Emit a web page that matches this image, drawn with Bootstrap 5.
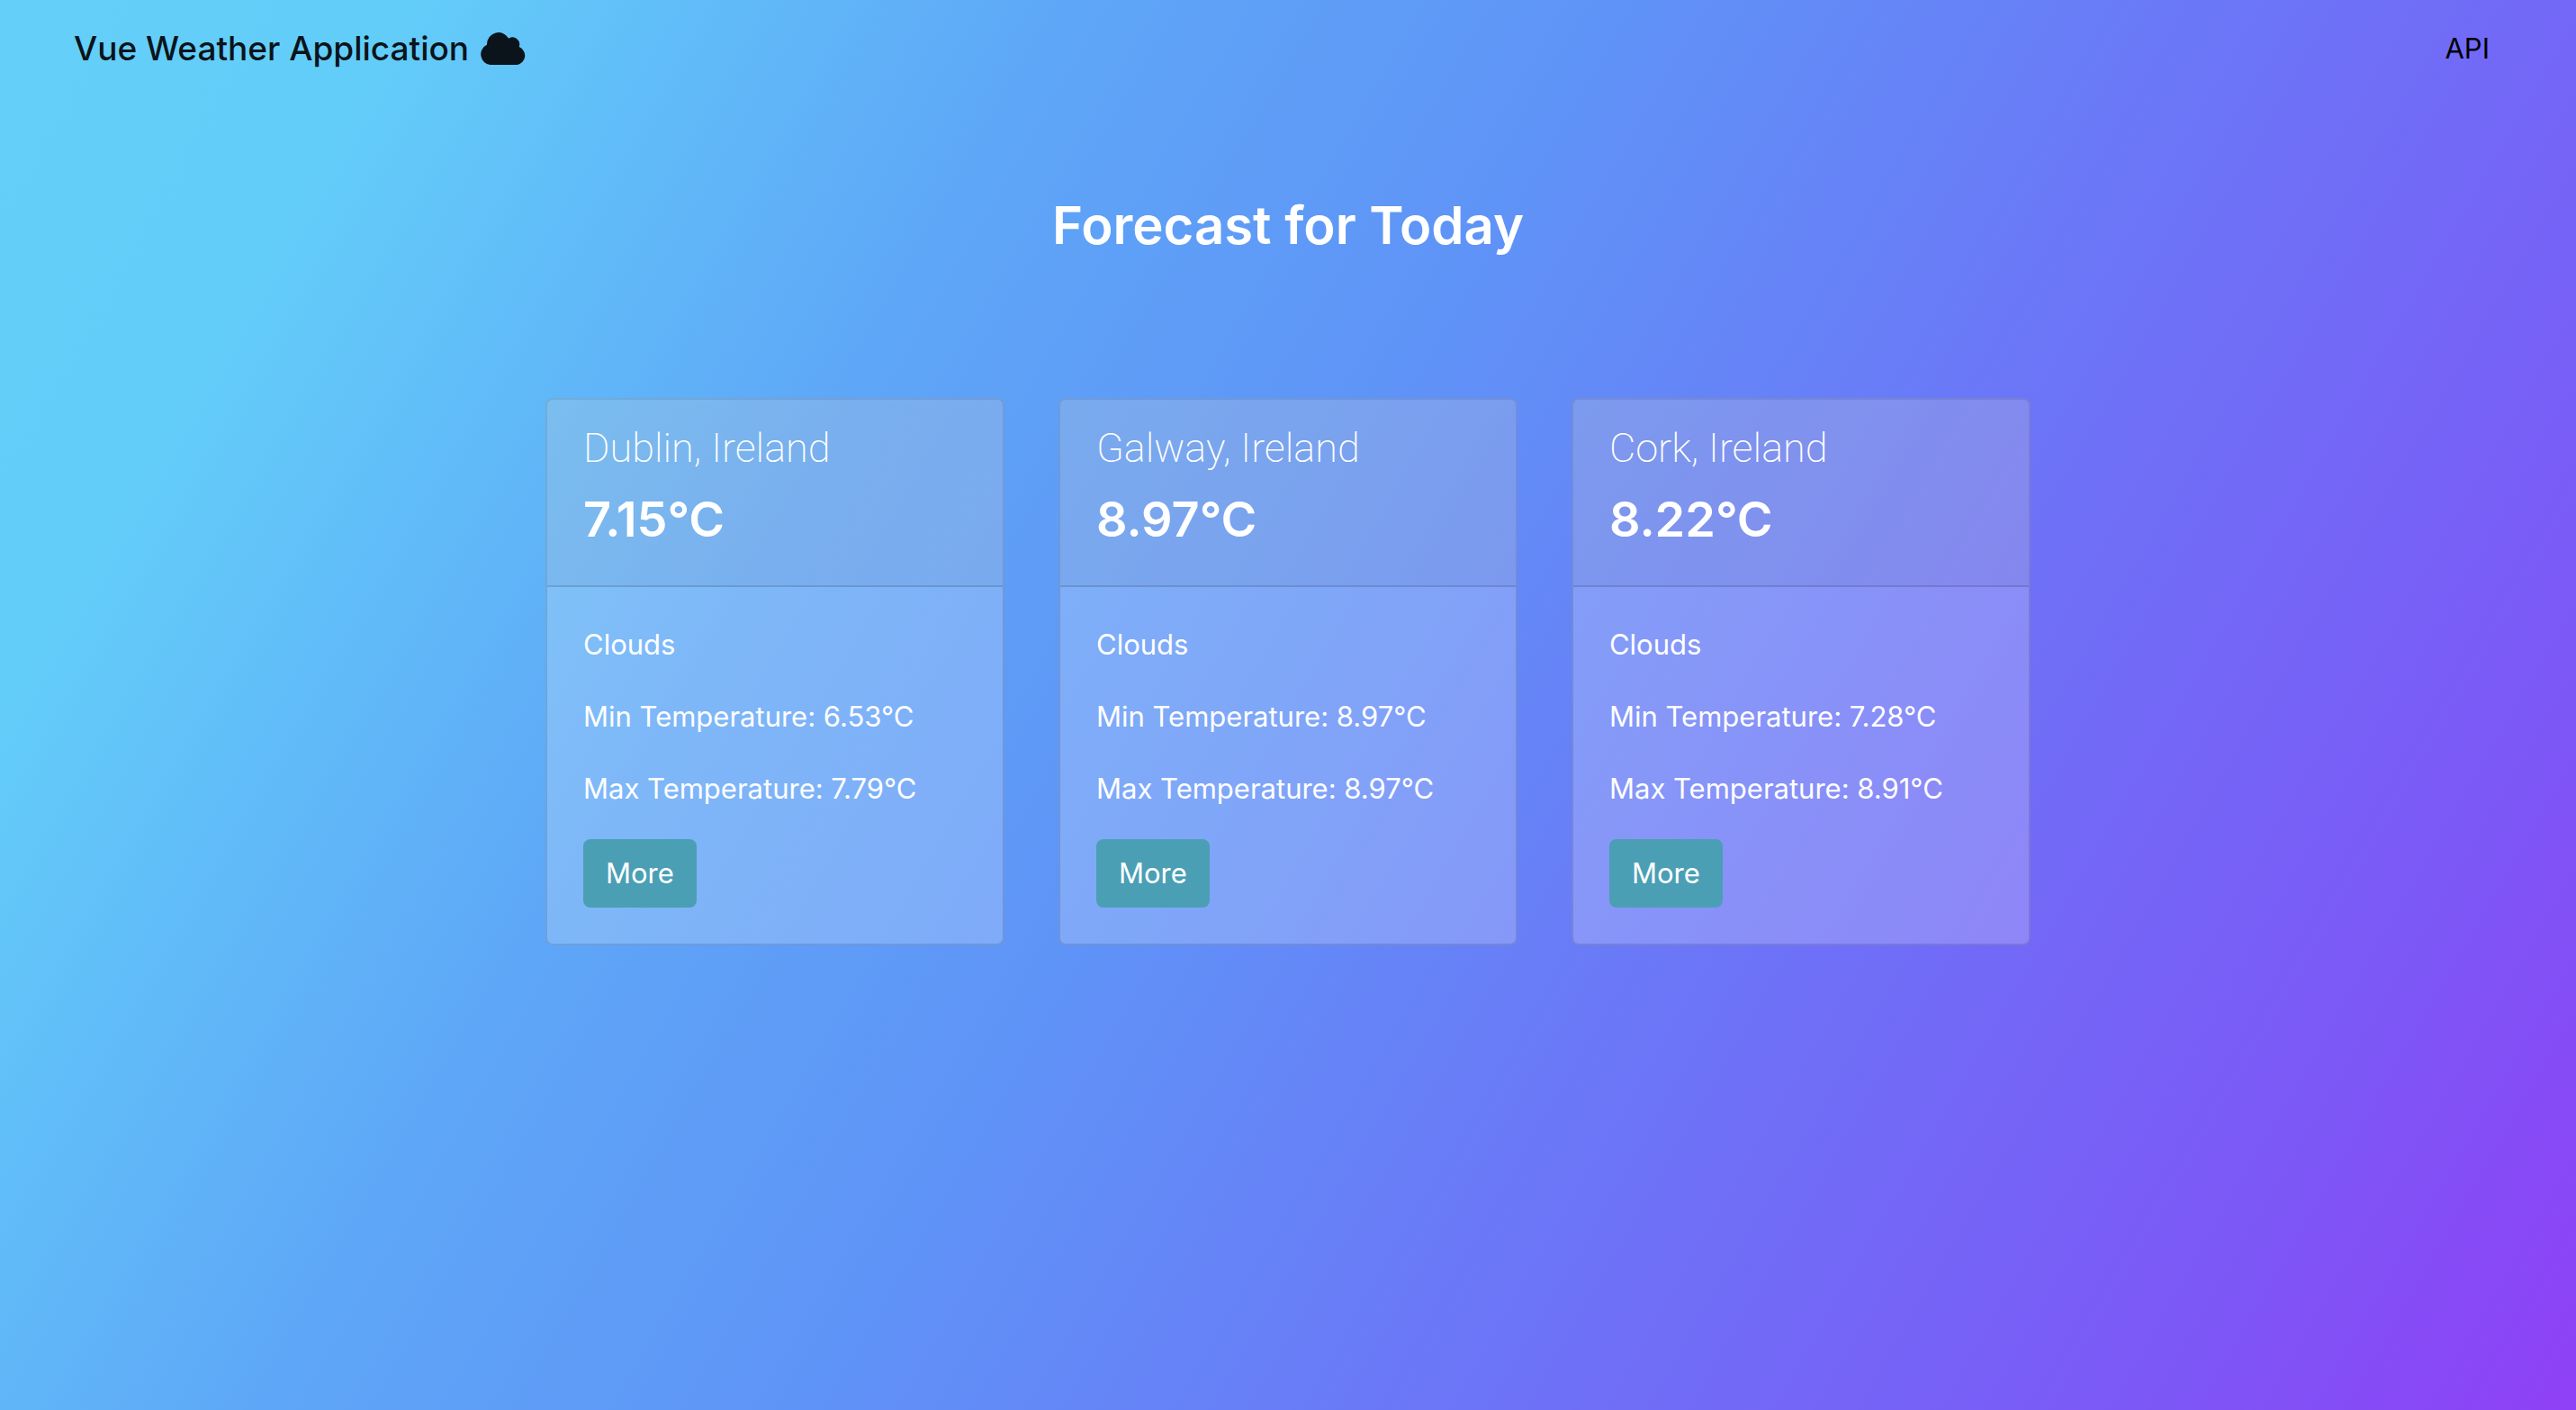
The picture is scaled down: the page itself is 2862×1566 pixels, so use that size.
<!DOCTYPE html>
<html lang="en">
<head>
<meta charset="utf-8">
<meta name="viewport" content="width=device-width, initial-scale=1">
<title>Vue Weather Application</title>
<link href="https://cdn.jsdelivr.net/npm/bootstrap@5.3.0/dist/css/bootstrap.min.css" rel="stylesheet">
<style>
  body {
    min-height: 100vh;
    font-family: Inter, "Liberation Sans", sans-serif;
    font-size: 32px;
    line-height: 48px;
    color: #fff;
    background: linear-gradient(120deg, #64cff9 0%, #63cdf9 12%, #5ea6f7 32%, #5f93f7 48%, #6e70f7 70%, #7c58f6 87%, #8f40f6 100%) no-repeat fixed;
  }
  .site-nav { padding: 22px 80px 22px 82px; }
  .site-nav .navbar-brand { font-size: 37px; line-height: 60px; font-weight: 500; color: #0a141a; padding: 0; margin: 0; }
  .site-nav .nav-link { font-size: 31px; line-height: 48px; color: #000; padding: 8px 16px; }
  .cloud-icon { width: 52px; height: 36px; margin-left: 12px; }
  .page-title { font-size: 58px; line-height: 76px; font-weight: 600; margin: 104px 0 154px; }
  .forecast { max-width: 1710px; }
  .forecast > .row { --bs-gutter-x: 60px; }
  .city-card {
    --bs-card-bg: rgba(255, 255, 255, .2);
    --bs-card-color: #fff;
    --bs-card-border-width: 2px;
    --bs-card-border-color: rgba(0, 0, 0, .125);
    --bs-card-border-radius: 8px;
    --bs-card-inner-border-radius: 6px;
    --bs-card-cap-bg: rgba(0, 0, 0, .04);
    --bs-card-cap-padding-y: 24px;
    --bs-card-cap-padding-x: 40px;
    --bs-card-spacer-y: 40px;
    --bs-card-spacer-x: 40px;
  }
  .city-card .card-header { padding-bottom: 38px; }
  .city-name { font-family: Roboto, Inter, sans-serif; font-size: 45px; line-height: 60px; font-weight: 200; margin: 0 0 14px; }
  .city-temp { font-size: 54px; line-height: 70px; font-weight: 600; margin: 0; }
  .city-card p { font-size: 31px; margin-bottom: 32px; }
  .btn-more {
    --bs-btn-color: #fff;
    --bs-btn-bg: #4b9fb5;
    --bs-btn-hover-color: #fff;
    --bs-btn-hover-bg: #418da1;
    --bs-btn-font-size: 31px;
    --bs-btn-line-height: 48px;
    --bs-btn-border-width: 2px;
    --bs-btn-padding-y: 12px;
    --bs-btn-padding-x: 23px;
    --bs-btn-border-radius: 8px;
  }
</style>
<script src="https://cdn.jsdelivr.net/npm/bootstrap@5.3.0/dist/js/bootstrap.bundle.min.js"></script>
</head>
<body>
<nav class="navbar site-nav d-flex justify-content-between">
  <a class="navbar-brand d-flex align-items-center" href="#">Vue Weather Application
    <svg class="cloud-icon" viewBox="0 0 52 36" fill="currentColor" aria-hidden="true"><path d="M43.7 16.1A7.8 7.8 0 0 0 32.300 6.700A13 13 0 0 0 8 13A13.500 13.500 0 0 0 7.900 13.800A11.700 11.700 0 0 0 11.700 36H41.600A10.400 10.400 0 0 0 43.700 16.100Z"/></svg>
  </a>
  <ul class="navbar-nav">
    <li class="nav-item"><a class="nav-link" href="#">API</a></li>
  </ul>
</nav>
<main>
  <h1 class="page-title text-center">Forecast for Today</h1>
  <div class="container-fluid forecast px-0">
    <div class="row mx-0">
      <div class="col-4">
        <div class="card city-card">
          <div class="card-header">
            <h2 class="city-name">Dublin, Ireland</h2>
            <h3 class="city-temp">7.15°C</h3>
          </div>
          <div class="card-body">
            <p>Clouds</p>
            <p>Min Temperature: 6.53°C</p>
            <p>Max Temperature: 7.79°C</p>
            <button type="button" class="btn btn-more d-block">More</button>
          </div>
        </div>
      </div>
      <div class="col-4">
        <div class="card city-card">
          <div class="card-header">
            <h2 class="city-name">Galway, Ireland</h2>
            <h3 class="city-temp">8.97°C</h3>
          </div>
          <div class="card-body">
            <p>Clouds</p>
            <p>Min Temperature: 8.97°C</p>
            <p>Max Temperature: 8.97°C</p>
            <button type="button" class="btn btn-more d-block">More</button>
          </div>
        </div>
      </div>
      <div class="col-4">
        <div class="card city-card">
          <div class="card-header">
            <h2 class="city-name">Cork, Ireland</h2>
            <h3 class="city-temp">8.22°C</h3>
          </div>
          <div class="card-body">
            <p>Clouds</p>
            <p>Min Temperature: 7.28°C</p>
            <p>Max Temperature: 8.91°C</p>
            <button type="button" class="btn btn-more d-block">More</button>
          </div>
        </div>
      </div>
    </div>
  </div>
</main>
</body>
</html>
